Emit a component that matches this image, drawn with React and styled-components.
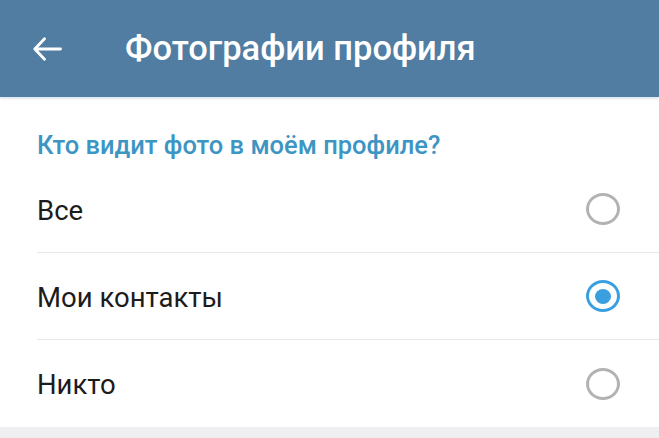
import React from "react";
import styled, { createGlobalStyle } from "styled-components";

const Global = createGlobalStyle`
  html, body { margin: 0; padding: 0; background: #efeff1; }
  body { font-family: Roboto, "Noto Sans", sans-serif; }
  * { box-sizing: border-box; }
`;

const Page = styled.div`
  width: 659px;
  height: 438px;
  display: flex;
  flex-direction: column;
  background: #efeff1;
  overflow: hidden;
`;

const Header = styled.header`
  height: 97px;
  flex-shrink: 0;
  background: #517da2;
  display: flex;
  align-items: center;
  padding-left: 33px;
  gap: 63px;
  box-shadow: 0 2px 2px rgba(120, 160, 200, 0.25);
  position: relative;
  z-index: 1;
`;

const BackButton = styled.button`
  border: 0;
  background: none;
  padding: 0;
  width: 29px;
  height: 30px;
  display: flex;
  align-items: center;
  justify-content: center;
  color: #fff;
`;

const Title = styled.h1`
  margin: 0;
  color: #fff;
  font-size: 34.5px;
  font-weight: 500;
  letter-spacing: 0;
  padding-bottom: 2px;
`;

const Panel = styled.section`
  background: #fff;
  padding-top: 28px;
`;

const SectionTitle = styled.h2`
  margin: 0 0 0 37px;
  color: #3d95c4;
  font-size: 25.5px;
  font-weight: 500;
  line-height: 41px;
`;

const Row = styled.label`
  height: 87px;
  margin-left: 37px;
  padding-right: 39px;
  display: flex;
  align-items: center;
  justify-content: space-between;
  border-bottom: ${(p) => (p.$last ? "none" : "1px solid #e8e8ea")};
  cursor: pointer;
`;

const RowText = styled.span`
  font-size: 27.5px;
  color: #1c1c1c;
  padding-top: 2px;
`;

const Radio = styled.span`
  width: 34px;
  height: 32px;
  border-radius: 50%;
  border: 3px solid ${(p) => (p.$checked ? "#3a9fdf" : "#b2b2b2")};
  display: flex;
  align-items: center;
  justify-content: center;
  &::after {
    content: "";
    width: 16px;
    height: 15px;
    border-radius: 50%;
    background: #3a9fdf;
    display: ${(p) => (p.$checked ? "block" : "none")};
  }
`;

const options = ["Все", "Мои контакты", "Никто"];

export default function App() {
  const [sel, setSel] = React.useState(1);
  return (
    <Page>
      <Global />
      <Header>
        <BackButton aria-label="Назад">
          <svg width="29" height="24" viewBox="0 0 29 24" fill="none">
            <path
              d="M27.5 12H1.8M11.5 1.8L1.8 12l9.7 10.2"
              stroke="#fff"
              strokeWidth="2.8"
              strokeLinecap="round"
              strokeLinejoin="round"
            />
          </svg>
        </BackButton>
        <Title>Фотографии профиля</Title>
      </Header>
      <Panel>
        <SectionTitle>Кто видит фото в моём профиле?</SectionTitle>
        {options.map((o, i) => (
          <Row key={o} $last={i === options.length - 1} onClick={() => setSel(i)}>
            <RowText>{o}</RowText>
            <Radio $checked={sel === i} />
          </Row>
        ))}
      </Panel>
    </Page>
  );
}
